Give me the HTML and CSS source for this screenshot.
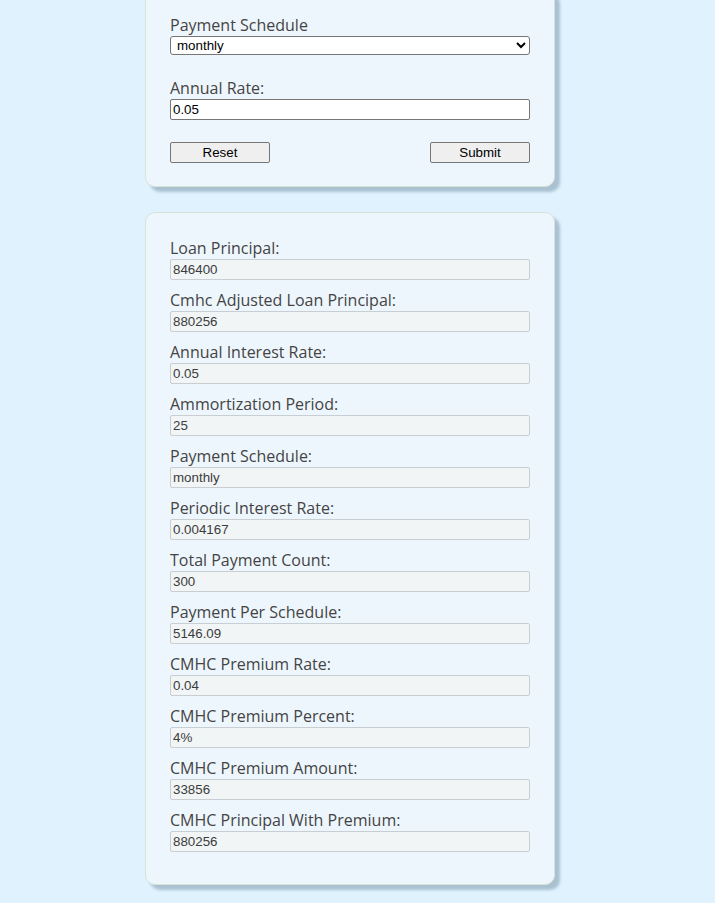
FILE: index.html
```html
<!DOCTYPE html>
<html lang="en">
<head>
<meta charset="utf-8">
<title>Mortgage Calculator</title>
<link rel="stylesheet" href="styles.css">
</head>
<body>
<main class="page">
  <form class="card card-form">
    <div class="field">
      <label class="label" for="schedule">Payment Schedule</label>
      <select id="schedule" class="select">
        <option>monthly</option>
        <option>bi-weekly</option>
        <option>weekly</option>
      </select>
    </div>
    <div class="field field-gap">
      <label class="label" for="rate">Annual Rate:</label>
      <input id="rate" class="input" type="text" value="0.05">
    </div>
    <div class="actions">
      <button type="reset" class="btn">Reset</button>
      <button type="button" class="btn">Submit</button>
    </div>
  </form>

  <section class="card card-results">
    <div class="row"><label class="label">Loan Principal:</label><input class="output" readonly value="846400"></div>
    <div class="row"><label class="label">Cmhc Adjusted Loan Principal:</label><input class="output" readonly value="880256"></div>
    <div class="row"><label class="label">Annual Interest Rate:</label><input class="output" readonly value="0.05"></div>
    <div class="row"><label class="label">Ammortization Period:</label><input class="output" readonly value="25"></div>
    <div class="row"><label class="label">Payment Schedule:</label><input class="output" readonly value="monthly"></div>
    <div class="row"><label class="label">Periodic Interest Rate:</label><input class="output" readonly value="0.004167"></div>
    <div class="row"><label class="label">Total Payment Count:</label><input class="output" readonly value="300"></div>
    <div class="row"><label class="label">Payment Per Schedule:</label><input class="output" readonly value="5146.09"></div>
    <div class="row"><label class="label">CMHC Premium Rate:</label><input class="output" readonly value="0.04"></div>
    <div class="row"><label class="label">CMHC Premium Percent:</label><input class="output" readonly value="4%"></div>
    <div class="row"><label class="label">CMHC Premium Amount:</label><input class="output" readonly value="33856"></div>
    <div class="row"><label class="label">CMHC Principal With Premium:</label><input class="output" readonly value="880256"></div>
  </section>
</main>
</body>
</html>
```
FILE: styles.css
```css
html, body {
  margin: 0;
  padding: 0;
  background: #e0f2fe;
}

.page {
  width: 700px;
  display: flex;
  flex-direction: column;
  align-items: center;
  padding-bottom: 20px;
}

.card {
  box-sizing: border-box;
  width: 410px;
  background: #eef6fd;
  border: 1px solid #d6e4d6;
  border-radius: 10px;
  box-shadow: 5px 5px 3px #a9c1d1;
  padding: 24px 24px 23px;
  display: flex;
  flex-direction: column;
}

.card-form {
  margin: -11px 0 0 0;
}

.card-results {
  margin-top: 25px;
  padding-bottom: 32px;
}

.label {
  display: block;
  font-family: "Open Sans", sans-serif;
  font-size: 16px;
  line-height: 22px;
  color: #444;
}

.field {
  display: flex;
  flex-direction: column;
}

.field-gap {
  margin-top: 22px;
}

.select {
  box-sizing: border-box;
  width: 360px;
  height: 19px;
  margin: 0;
  font-family: "Liberation Sans", Arial, sans-serif;
  font-size: 13.333px;
  color: #000;
  background: #fff;
  border: 1px solid #767676;
  border-radius: 3px;
  padding: 0 0 0 2px;
}

.input {
  box-sizing: border-box;
  width: 360px;
  height: 21px;
  margin: 0;
  padding: 1px 2px;
  font-family: "Liberation Sans", Arial, sans-serif;
  font-size: 13.333px;
  color: #000;
  background: #fff;
  border: 1px solid #767676;
  border-radius: 2px;
}

.actions {
  display: flex;
  justify-content: space-between;
  margin-top: 22px;
}

.btn {
  box-sizing: border-box;
  width: 100px;
  height: 21px;
  margin: 0;
  padding: 0;
  font-family: "Liberation Sans", Arial, sans-serif;
  font-size: 13.333px;
  color: #000;
  background: #efefef;
  border: 1px solid #767676;
  border-radius: 2px;
}

.row {
  display: flex;
  flex-direction: column;
  margin-bottom: 9px;
}

.row:last-child {
  margin-bottom: 0;
}

.output {
  box-sizing: border-box;
  width: 360px;
  height: 21px;
  margin: 0;
  padding: 1px 2px;
  font-family: "Liberation Sans", Arial, sans-serif;
  font-size: 13.333px;
  color: #3c3c3c;
  background: #f1f5f6;
  border: 1px solid #c9ced2;
  border-radius: 2px;
  outline: none;
}
```
